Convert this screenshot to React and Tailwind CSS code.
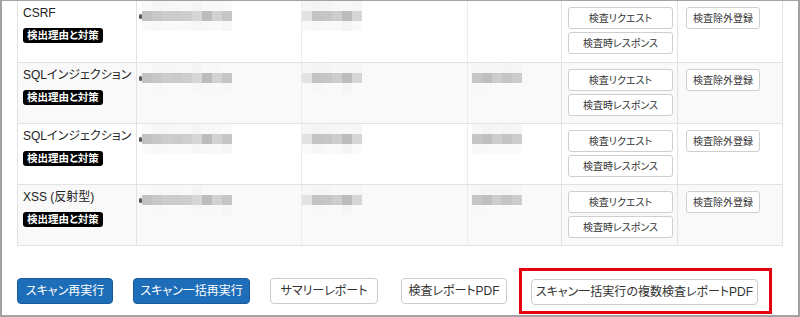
import React from "react";

const font = { fontFamily: '"Liberation Sans", "Noto Sans CJK JP", sans-serif' };

const mosA = [
  ["#fafafa", "#f6f6f6", "#f6f6f6", "#f7f7f7", "#f8f8f8", "#f5f5f5", "#f8f8f8", "#f8f8f8", "#fafafa"],
  ["#c2c2c2", "#c8c8c8", "#cdcdcd", "#cbcbcb", "#cecece", "#d6d6d6", "#bcbcbc", "#d2d2d2", "#c6c6c6"],
  ["#fafafa", "#f8f8f8", "#f9f9f9", "#fafafa", "#fafafa", "#f7f7f7", "#f8f8f8", "#f9f9f9", "#f6f6f6"],
];
const mosB = [
  ["#f6f6f6", "#f4f4f4", "#f5f5f5", "#f7f7f7", "#f7f7f7", "#f6f6f6"],
  ["#e2e2e2", "#c4c4c4", "#c6c6c6", "#cdcdcd", "#bcbcbc", "#d6d6d6"],
  ["#fafafa", "#f7f7f7", "#f9f9f9", "#f9f9f9", "#f5f5f5", "#fafafa"],
];
const mosC = [
  ["#f6f6f6", "#f5f5f5", "#f6f6f6", "#f5f5f5", "#f6f6f6"],
  ["#c6c6c6", "#bfbfbf", "#cdcdcd", "#c4c4c4", "#cccccc"],
  ["#f8f8f8", "#f9f9f9", "#fafafa", "#f9f9f9", "#fafafa"],
];

function Mosaic({ data, dot }) {
  return (
    <div className="relative flex flex-col">
      {dot && <div className="absolute left-[-3px] top-[13px] h-[5px] w-[3px] rounded-full bg-[#555]" />}
      {data.map((row, i) => (
        <div key={i} className="flex">
          {row.map((c, j) => (
            <div key={j} className="h-[10px] w-[10px]" style={{ background: c }} />
          ))}
        </div>
      ))}
    </div>
  );
}

const rows = [
  { name: "CSRF", bg: "bg-white", c4: false },
  { name: "SQLインジェクション", bg: "bg-[#f9f9f9]", c4: true },
  { name: "SQLインジェクション", bg: "bg-white", c4: true },
  { name: "XSS (反射型)", bg: "bg-[#f9f9f9]", c4: true },
];

function SmallBtn({ children, w }) {
  return (
    <div
      className={`flex h-[22px] items-center justify-center whitespace-nowrap rounded-[3px] border border-[#cfcfcf] bg-white text-[10px] text-[#333] ${w}`}
    >
      {children}
    </div>
  );
}

function Row({ r, first }) {
  return (
    <div className={`flex h-[61px] ${r.bg} ${first ? "" : "border-t border-[#e2e2e2]"}`}>
      <div className="w-[118px] shrink-0 pl-[5px] pt-[4px]">
        <div className="whitespace-nowrap text-[12px] leading-[17px] text-[#222]">{r.name}</div>
        <div className="mt-[6px] inline-flex h-[15px] items-center whitespace-nowrap rounded-[3px] bg-black px-[4px] text-[10.5px] font-bold leading-none text-white">
          検出理由と対策
        </div>
      </div>
      <div className="w-[165px] shrink-0 border-l border-[#e2e2e2] pl-[5px] pt-0">
        <Mosaic data={mosA} dot />
      </div>
      <div className="w-[166px] shrink-0 border-l border-[#ececec] pl-0">
        <Mosaic data={mosB} />
      </div>
      <div className="w-[94px] shrink-0 border-l border-[#ececec] pl-[4px]">
        {r.c4 && <Mosaic data={mosC} />}
      </div>
      <div className="flex w-[116px] shrink-0 flex-col gap-[3px] border-l border-[#e2e2e2] pl-[6px] pt-[6px]">
        <SmallBtn w="w-[105px]">検査リクエスト</SmallBtn>
        <SmallBtn w="w-[105px]">検査時レスポンス</SmallBtn>
      </div>
      <div className="w-[106px] shrink-0 border-l border-[#e2e2e2] pl-[8px] pt-[6px]">
        <SmallBtn w="w-[74px]">検査除外登録</SmallBtn>
      </div>
    </div>
  );
}

function BigBtn({ children, primary, w }) {
  return (
    <div
      className={`flex h-[26px] shrink-0 items-center justify-center whitespace-nowrap rounded-[4px] border text-[12px] ${w} ${
        primary ? "border-[#185c9c] bg-[#1d6db8] text-white" : "border-[#cccccc] bg-white text-[#333]"
      }`}
    >
      {children}
    </div>
  );
}

export default function App() {
  return (
    <div
      className="h-[317px] w-[800px] overflow-hidden border-x-2 border-b-2 border-t border-[#a2a2a2] bg-white [font-feature-settings:'palt']"
      style={font}
    >
      <div className="pl-[15px]">
        <div className="w-[766px] border-x border-b border-[#e2e2e2]">
          {rows.map((r, i) => (
            <Row key={i} r={r} first={i === 0} />
          ))}
        </div>
        <div className="mt-[22px] flex items-center">
          <BigBtn primary w="w-[96px]">スキャン再実行</BigBtn>
          <div className="w-[20px]" />
          <BigBtn primary w="w-[117px]">スキャン一括再実行</BigBtn>
          <div className="w-[20px]" />
          <BigBtn w="w-[108px]">サマリーレポート</BigBtn>
          <div className="w-[23px]" />
          <BigBtn w="w-[106px]">検査レポートPDF</BigBtn>
          <div className="w-[12px]" />
          <div className="flex h-[46px] w-[253px] items-center border-[3px] border-[#e60012] pl-[9px] pt-[2px]">
            <BigBtn w="w-[227px]">スキャン一括実行の複数検査レポートPDF</BigBtn>
          </div>
        </div>
      </div>
    </div>
  );
}
